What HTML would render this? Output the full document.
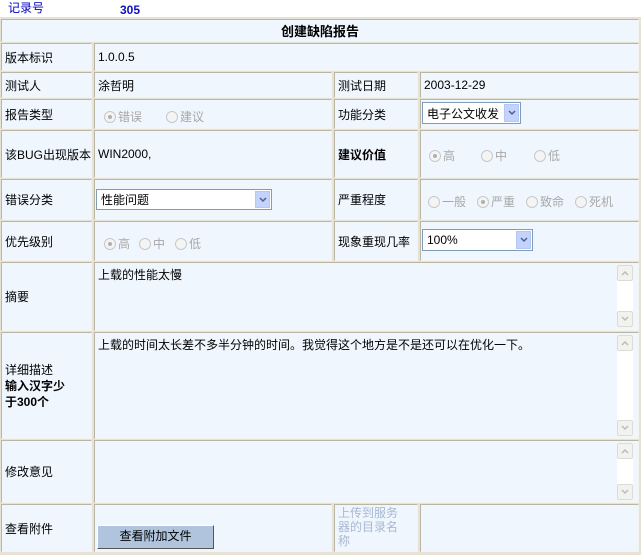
<!DOCTYPE html>
<html><head><meta charset="utf-8"><style>
body{margin:0;width:641px;height:555px;background:#fff;position:relative;overflow:hidden;font-family:"Liberation Sans","Noto Sans CJK SC","WenQuanYi Zen Hei",sans-serif;font-size:12px;color:#000}
.tb{position:absolute;left:0;top:17px;width:641px;height:538px;background:#e6e3d4}
.c{position:absolute;background:#eff6fe;border:1px solid #b9b6a6;border-right-color:#f4f3ee;border-bottom-color:#f4f3ee;box-sizing:border-box;display:flex;align-items:center;padding-left:3px;white-space:nowrap}
.r{display:inline-block;width:12px;height:12px;border:1px solid #c8c8c8;border-radius:50%;box-sizing:border-box;margin-right:2px;position:relative;background:#f4f4f4}
.r.on::after{content:"";position:absolute;left:3px;top:3px;width:4px;height:4px;border-radius:50%;background:#b0b0b0}
.rl{position:absolute;display:flex;align-items:center;color:#a8a8a8}
.sel{position:absolute;background:#fff;border:1px solid #7f9db9;box-sizing:border-box;padding-left:4px;display:flex;align-items:center}
.sel .ar{position:absolute;right:1px;top:1px;bottom:1px;width:15px;background:#c3d3fd;border:1px solid #b4c8f6;box-sizing:border-box;display:flex;align-items:center;justify-content:center}
.sb{position:absolute;width:16px;background:#fff}
.sb i{position:absolute;left:0;width:16px;height:16px;border:1px solid #dcdcd4;box-sizing:border-box;background:#f2f2ee;border-radius:2px;display:flex;align-items:center;justify-content:center}
</style></head><body>
<div style="position:absolute;left:8px;top:-1px;color:#0000c0">记录号</div>
<div style="position:absolute;left:120px;top:3px;color:#1010c0;font-weight:bold">305</div>
<div class="tb"></div>
<div class="c" style="left:1px;top:19px;width:638px;height:23px;justify-content:center;font-weight:bold;padding:0;font-size:13px">创建缺陷报告</div>

<div class="c" style="left:1px;top:43px;width:91px;height:28px">版本标识</div>
<div class="c" style="left:94px;top:43px;width:545px;height:28px">1.0.0.5</div>

<div class="c" style="left:1px;top:72px;width:91px;height:26px">测试人</div>
<div class="c" style="left:94px;top:72px;width:238px;height:26px">涂哲明</div>
<div class="c" style="left:334px;top:72px;width:84px;height:26px">测试日期</div>
<div class="c" style="left:420px;top:72px;width:219px;height:26px">2003-12-29</div>

<div class="c" style="left:1px;top:99px;width:91px;height:30px">报告类型</div>
<div class="c" style="left:94px;top:99px;width:238px;height:30px"></div>
<div class="rl" style="left:104px;top:108px"><span class="r on"></span>错误</div>
<div class="rl" style="left:166px;top:108px"><span class="r"></span>建议</div>
<div class="c" style="left:334px;top:99px;width:84px;height:30px">功能分类</div>
<div class="c" style="left:420px;top:99px;width:219px;height:30px"></div>
<div class="sel" style="left:422px;top:102px;width:99px;height:22px">电子公文收发<div class="ar"><svg width="8" height="6"><path d="M1 1L4 4L7 1" stroke="#4d6185" stroke-width="1.5" fill="none"/></svg></div></div>

<div class="c" style="left:1px;top:130px;width:91px;height:48px">该BUG出现版本</div>
<div class="c" style="left:94px;top:130px;width:238px;height:48px">WIN2000,</div>
<div class="c" style="left:334px;top:130px;width:84px;height:48px;font-weight:bold">建议价值</div>
<div class="c" style="left:420px;top:130px;width:219px;height:48px"></div>
<div class="rl" style="left:429px;top:147px"><span class="r on"></span>高</div>
<div class="rl" style="left:481px;top:147px"><span class="r"></span>中</div>
<div class="rl" style="left:534px;top:147px"><span class="r"></span>低</div>

<div class="c" style="left:1px;top:179px;width:91px;height:41px">错误分类</div>
<div class="c" style="left:94px;top:179px;width:238px;height:41px"></div>
<div class="sel" style="left:96px;top:189px;width:176px;height:21px">性能问题<div class="ar"><svg width="8" height="6"><path d="M1 1L4 4L7 1" stroke="#4d6185" stroke-width="1.5" fill="none"/></svg></div></div>
<div class="c" style="left:334px;top:179px;width:84px;height:41px">严重程度</div>
<div class="c" style="left:420px;top:179px;width:219px;height:41px"></div>
<div class="rl" style="left:428px;top:193px"><span class="r"></span>一般</div>
<div class="rl" style="left:477px;top:193px"><span class="r on"></span>严重</div>
<div class="rl" style="left:526px;top:193px"><span class="r"></span>致命</div>
<div class="rl" style="left:575px;top:193px"><span class="r"></span>死机</div>

<div class="c" style="left:1px;top:221px;width:91px;height:40px">优先级别</div>
<div class="c" style="left:94px;top:221px;width:238px;height:40px"></div>
<div class="rl" style="left:104px;top:235px"><span class="r on"></span>高</div>
<div class="rl" style="left:139px;top:235px"><span class="r"></span>中</div>
<div class="rl" style="left:175px;top:235px"><span class="r"></span>低</div>
<div class="c" style="left:334px;top:221px;width:84px;height:40px">现象重现几率</div>
<div class="c" style="left:420px;top:221px;width:219px;height:40px"></div>
<div class="sel" style="left:422px;top:229px;width:111px;height:22px">100%<div class="ar"><svg width="8" height="6"><path d="M1 1L4 4L7 1" stroke="#4d6185" stroke-width="1.5" fill="none"/></svg></div></div>

<div class="c" style="left:1px;top:262px;width:91px;height:69px">摘要</div>
<div class="c" style="left:94px;top:262px;width:545px;height:69px;align-items:flex-start;padding-top:3px">上载的性能太慢</div>
<div class="sb" style="left:617px;top:265px;height:62px"><i style="top:0"><svg width="8" height="6"><path d="M1 5L4 2L7 5" stroke="#bbb" stroke-width="1.5" fill="none"/></svg></i><i style="bottom:0"><svg width="8" height="6"><path d="M1 1L4 4L7 1" stroke="#bbb" stroke-width="1.5" fill="none"/></svg></i></div>

<div class="c" style="left:1px;top:332px;width:91px;height:107px;display:block;white-space:normal;line-height:16px;padding-top:29px;padding-right:16px">详细描述<br><b>输入汉字少于300个</b></div>
<div class="c" style="left:94px;top:332px;width:545px;height:107px;align-items:flex-start;padding-top:3px">上载的时间太长差不多半分钟的时间。我觉得这个地方是不是还可以在优化一下。</div>
<div class="sb" style="left:617px;top:335px;height:101px"><i style="top:0"><svg width="8" height="6"><path d="M1 5L4 2L7 5" stroke="#bbb" stroke-width="1.5" fill="none"/></svg></i><i style="bottom:0"><svg width="8" height="6"><path d="M1 1L4 4L7 1" stroke="#bbb" stroke-width="1.5" fill="none"/></svg></i></div>

<div class="c" style="left:1px;top:440px;width:91px;height:63px">修改意见</div>
<div class="c" style="left:94px;top:440px;width:545px;height:63px"></div>
<div class="sb" style="left:617px;top:443px;height:57px"><i style="top:0"><svg width="8" height="6"><path d="M1 5L4 2L7 5" stroke="#bbb" stroke-width="1.5" fill="none"/></svg></i><i style="bottom:0"><svg width="8" height="6"><path d="M1 1L4 4L7 1" stroke="#bbb" stroke-width="1.5" fill="none"/></svg></i></div>

<div class="c" style="left:1px;top:504px;width:91px;height:48px">查看附件</div>
<div class="c" style="left:94px;top:504px;width:238px;height:48px"></div>
<div style="position:absolute;left:97px;top:525px;width:117px;height:24px;background:#b0c4de;border:1px solid;border-color:#fff #555 #555 #fff;box-sizing:border-box;text-align:center;line-height:21px">查看附加文件</div>
<div class="c" style="left:334px;top:504px;width:84px;height:48px;display:block;white-space:normal;color:#a8b8d0;line-height:14px;padding-top:1px;padding-right:14px">上传到服务器的目录名称</div>
<div class="c" style="left:420px;top:504px;width:219px;height:48px"></div>
</body></html>
